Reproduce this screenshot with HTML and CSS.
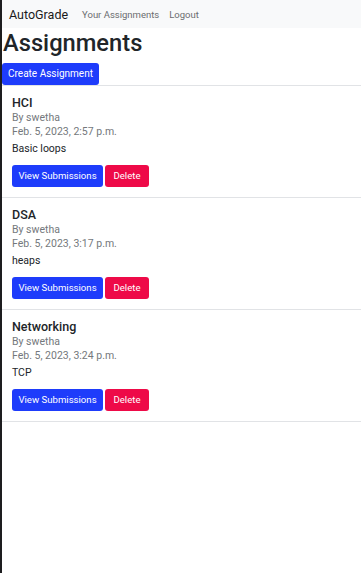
FILE: index.html
```html
<!DOCTYPE html>
<html lang="en">
<head>
<meta charset="utf-8">
<title>AutoGrade</title>
<link rel="stylesheet" href="styles.css">
</head>
<body>
<nav class="navbar">
  <a class="brand" href="#">AutoGrade</a>
  <div class="nav-links">
    <a class="nav-link" href="#">Your Assignments</a>
    <a class="nav-link" href="#">Logout</a>
  </div>
</nav>
<main class="main">
  <h1 class="page-title">Assignments</h1>
  <a class="btn btn-primary btn-create" href="#">Create Assignment</a>
  <ul class="list">
    <li class="item">
      <h5 class="item-title">HCI</h5>
      <div class="meta">By swetha</div>
      <div class="meta">Feb. 5, 2023, 2:57 p.m.</div>
      <p class="desc">Basic loops</p>
      <div class="actions">
        <a class="btn btn-primary btn-view" href="#">View Submissions</a>
        <a class="btn btn-danger btn-delete" href="#">Delete</a>
      </div>
    </li>
    <li class="item">
      <h5 class="item-title">DSA</h5>
      <div class="meta">By swetha</div>
      <div class="meta">Feb. 5, 2023, 3:17 p.m.</div>
      <p class="desc">heaps</p>
      <div class="actions">
        <a class="btn btn-primary btn-view" href="#">View Submissions</a>
        <a class="btn btn-danger btn-delete" href="#">Delete</a>
      </div>
    </li>
    <li class="item">
      <h5 class="item-title">Networking</h5>
      <div class="meta">By swetha</div>
      <div class="meta">Feb. 5, 2023, 3:24 p.m.</div>
      <p class="desc">TCP</p>
      <div class="actions">
        <a class="btn btn-primary btn-view" href="#">View Submissions</a>
        <a class="btn btn-danger btn-delete" href="#">Delete</a>
      </div>
    </li>
  </ul>
</main>
</body>
</html>
```
FILE: styles.css
```css
* { box-sizing: border-box; }
html, body { height: 100%; }
body {
  margin: 0;
  border-left: 2px solid #1d1d1f;
  font-family: Roboto, "Noto Sans", sans-serif;
  font-size: 10.5px;
  color: #212529;
  background: #fff;
}
a { text-decoration: none; }
.navbar {
  display: flex;
  align-items: center;
  height: 28px;
  padding-left: 7px;
  background: #f8f9fa;
}
.brand {
  font-size: 12.5px;
  color: #1a1a1a;
  white-space: nowrap;
}
.nav-links {
  display: flex;
  gap: 10px;
  margin-left: 14px;
}
.nav-link {
  font-size: 9.5px;
  color: #6b6d70;
  white-space: nowrap;
}
.page-title {
  margin: 0 0 4px 1px;
  font-size: 23.7px;
  font-weight: 500;
  line-height: 31px;
  color: #212529;
}
.btn {
  display: inline-block;
  height: 22px;
  padding: 0;
  line-height: 22px;
  font-size: 9.6px;
  color: #fff;
  border-radius: 3px;
  text-align: center;
  white-space: nowrap;
}
.btn-primary { background: #1e3cfb; }
.btn-danger { background: #ee0a48; }
.btn-create { display: block; width: 97px; font-size: 10px; }
.list {
  list-style: none;
  margin: 0;
  padding: 0;
  border-top: 1px solid #e1e3e6;
}
.item {
  padding: 9px 10px 10px;
  border-bottom: 1px solid #e1e3e6;
}
.item-title {
  margin: 0;
  font-size: 12.5px;
  font-weight: 500;
  line-height: 16px;
  color: #212529;
}
.meta {
  line-height: 14px;
  color: #74787c;
}
.desc {
  margin: 3px 0 0;
  line-height: 14px;
}
.actions {
  display: flex;
  gap: 2px;
  margin-top: 9px;
}
.btn-view { width: 91px; }
.btn-delete { width: 44px; }
```
